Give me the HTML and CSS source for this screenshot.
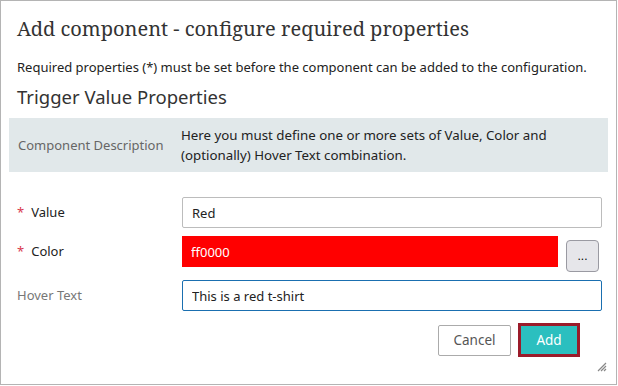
FILE: index.html
```html
<!DOCTYPE html>
<html lang="en">
<head>
    <meta charset="UTF-8">
    <title>Add component</title>
    <link rel="stylesheet" href="styles.css">
</head>
<body>
    <div class="dialog">
        <h1 class="dialog-title">Add component - configure required properties</h1>
        <p class="intro">Required properties (*) must be set before the component can be added to the configuration.</p>
        <h2 class="section-title">Trigger Value Properties</h2>

        <div class="desc">
            <div class="desc-label">Component Description</div>
            <div class="desc-text">Here you must define one or more sets of Value, Color and (optionally) Hover Text combination.</div>
        </div>

        <div class="fields">
            <div class="row">
                <label class="label required"><span class="star">*</span>Value</label>
                <input class="field" type="text" value="Red">
            </div>
            <div class="row">
                <label class="label required"><span class="star">*</span>Color</label>
                <div class="color-wrap">
                    <input class="field color" type="text" value="ff0000">
                    <button class="pick">...</button>
                </div>
            </div>
            <div class="row">
                <label class="label optional">Hover Text</label>
                <input class="field focused" type="text" value="This is a red t-shirt">
            </div>
        </div>

        <div class="actions">
            <button class="btn cancel">Cancel</button>
            <button class="btn add">Add</button>
        </div>

        <svg class="grip" width="10" height="10" viewBox="0 0 10 10">
            <path d="M9 1 L1 9 M9 4 L4 9 M9 7 L7 9" stroke="#888" stroke-width="1.2"/>
        </svg>
    </div>
</body>
</html>
```

FILE: styles.css
```css
* {
    box-sizing: border-box;
}
body {
    margin: 0;
    background: #fff;
    font-family: "Noto Sans", "Open Sans", sans-serif;
    color: #222;
}
.dialog {
    position: relative;
    width: 617px;
    height: 385px;
    border: 1px solid #b4b4b4;
    padding: 0 8px 0 8px;
}
.dialog-title {
    font-family: "Noto Serif", "DejaVu Serif", serif;
    font-weight: normal;
    font-size: 20px;
    color: #333;
    margin: 13px 0 0 8px;
    line-height: 30px;
}
.intro {
    font-size: 13px;
    margin: 14px 0 0 8px;
    line-height: 18px;
}
.section-title {
    font-weight: normal;
    font-size: 18.5px;
    color: #333;
    margin: 7px 0 0 8px;
    line-height: 28px;
}
.desc {
    display: flex;
    background: #e1e8ea;
    margin-top: 7px;
    height: 54px;
    width: 599px;
    align-items: center;
    font-size: 13px;
    line-height: 20px;
}
.desc-label {
    width: 172px;
    padding-left: 9px;
    color: #666;
}
.desc-text {
    flex: 1;
    color: #222;
    font-size: 13.3px;
    padding-right: 20px;
}
.fields {
    margin-top: 25px;
    display: flex;
    flex-direction: column;
    gap: 8px;
}
.row {
    display: flex;
    align-items: flex-start;
}
.label {
    width: 173px;
    padding-left: 8px;
    font-size: 13px;
    line-height: 31px;
}
.label.required {
    color: #222;
}
.label.optional {
    color: #777;
}
.star {
    color: #d9394e;
    margin-right: 7px;
}
.field {
    width: 420px;
    height: 31px;
    border: 1px solid #bcbcbc;
    border-radius: 2px;
    padding: 0 9px;
    font-family: inherit;
    font-size: 13px;
    color: #222;
}
.color-wrap {
    display: flex;
    align-items: flex-start;
    gap: 8px;
}
.field.color {
    width: 376px;
    background: #ff0000;
    border: none;
    border-radius: 0;
    color: #fff;
}
.pick {
    width: 33px;
    height: 32px;
    margin-top: 4px;
    background: #e6e6ea;
    border: 1px solid #9a9aa2;
    border-radius: 4px;
    font-size: 12px;
    padding: 0;
}
.field.focused {
    border-color: #1a6fb0;
}
.actions {
    display: flex;
    justify-content: flex-end;
    align-items: center;
    gap: 7px;
    margin-top: 12px;
    padding-right: 28px;
}
.btn {
    font-family: inherit;
    font-size: 13.5px;
    cursor: pointer;
}
.cancel {
    width: 73px;
    height: 31px;
    background: #fff;
    border: 1px solid #ababab;
    border-radius: 2px;
    color: #555;
}
.add {
    width: 62px;
    height: 34px;
    background: #2bbfbf;
    border: 3px solid #9b1b2a;
    color: #fff;
}
.grip {
    position: absolute;
    right: 9px;
    bottom: 12px;
}
```
